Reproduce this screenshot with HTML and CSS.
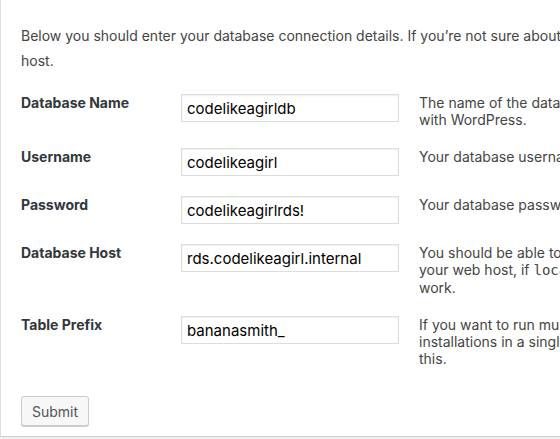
FILE: index.html
```html
<!DOCTYPE html>
<html lang="en">
<head>
<meta charset="utf-8">
<title>Database connection</title>
<link rel="stylesheet" href="styles.css">
</head>
<body>
<form class="panel">
  <p class="intro">Below you should enter your database connection details. If you’re not sure about these, contact your host.</p>
  <table class="form-table">
    <tr>
      <th>Database Name</th>
      <td class="field"><input class="text" type="text" value="codelikeagirldb"></td>
      <td class="desc">The name of the database you want to use with WordPress.</td>
    </tr>
    <tr>
      <th>Username</th>
      <td class="field"><input class="text" type="text" value="codelikeagirl"></td>
      <td class="desc">Your database username.</td>
    </tr>
    <tr>
      <th>Password</th>
      <td class="field"><input class="text" type="text" value="codelikeagirlrds!"></td>
      <td class="desc">Your database password.</td>
    </tr>
    <tr>
      <th>Database Host</th>
      <td class="field"><input class="text" type="text" value="rds.codelikeagirl.internal"></td>
      <td class="desc">You should be able to get this info from your web host, if <code>localhost</code> doesn’t<br>work.</td>
    </tr>
    <tr>
      <th>Table Prefix</th>
      <td class="field"><input class="text" type="text" value="bananasmith_"></td>
      <td class="desc">If you want to run multiple WordPress installations in a single database, change this.</td>
    </tr>
  </table>
  <div class="actions"><button class="button" type="button">Submit</button></div>
</form>
</body>
</html>
```
FILE: styles.css
```css
html, body {
  margin: 0;
  padding: 0;
  background: #f1f1f1;
  overflow: hidden;
}
body {
  width: 560px;
  height: 439px;
  font-family: Inter, "Open Sans", sans-serif;
  font-size: 14px;
  color: #444;
}
.panel {
  width: 800px;
  background: #fff;
  border-left: 1px solid #ddd;
  border-bottom: 1px solid #ccc;
  padding: 23px 20px 10px 20px;
  box-sizing: border-box;
}
.intro {
  margin: 0 0 11px;
  line-height: 25px;
  width: 690px;
}
.form-table {
  border-collapse: collapse;
  border-spacing: 0;
}
.form-table th,
.form-table td {
  padding: 10px 20px 10px 0;
  vertical-align: top;
  text-align: left;
  line-height: 17px;
}
.form-table th {
  width: 140px;
  min-width: 140px;
  font-weight: 700;
  color: #32373c;
}
.form-table .field {
  width: 218px;
}
.form-table .desc {
  width: 286px;
  min-width: 286px;
}
.text {
  width: 218px;
  height: 28px;
  box-sizing: border-box;
  border: 1px solid #ddd;
  box-shadow: inset 0 1px 2px rgba(0,0,0,.07);
  padding: 3px 5px;
  font-family: Inter, "Open Sans", sans-serif;
  font-size: 15px;
  color: #000;
  display: block;
  margin: 0;
  outline: none;
}
code {
  font-family: "DejaVu Sans Mono", monospace;
  font-size: 14px;
}
.actions {
  padding-top: 19px;
}
.button {
  display: block;
  height: 30px;
  width: 68px;
  border: 1px solid #ccc;
  border-radius: 3px;
  background: #f7f7f7;
  box-shadow: 0 1px 0 #ccc;
  color: #555;
  font-family: Inter, "Open Sans", sans-serif;
  font-size: 14px;
  padding: 0;
}
```
